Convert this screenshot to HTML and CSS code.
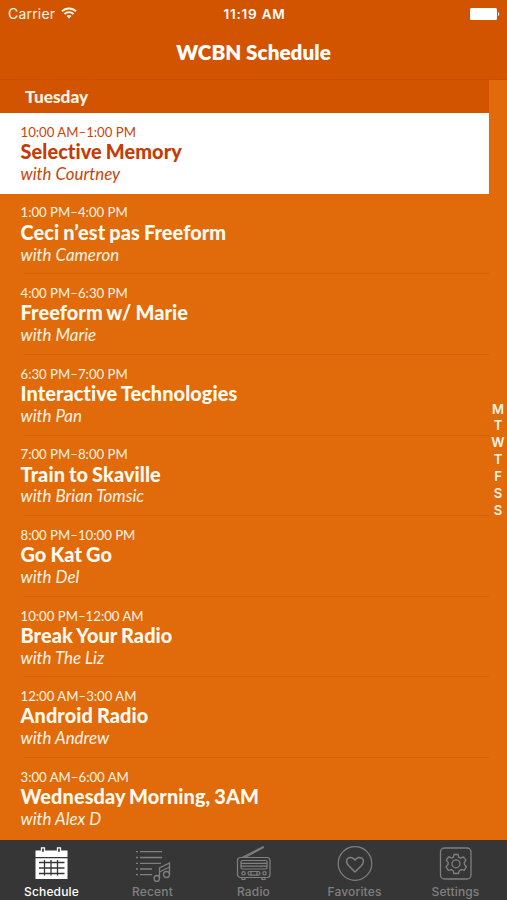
FILE: index.html
```html
<!DOCTYPE html>
<html lang="en">
<head>
<meta charset="utf-8">
<title>WCBN Schedule</title>
<link rel="stylesheet" href="styles.css">
</head>
<body>
<div class="app">
  <header class="top">
    <div class="status">
      <div class="carrier"><span>Carrier</span>
        <svg class="wifi" width="16" height="12" viewBox="0 0 16 12" fill="none" stroke="currentColor" stroke-width="1.900"><path d="M1 4.300a10 10 0 0 1 14 0M3.500 7a6.400 6.400 0 0 1 9 0"/><path d="M5.500 9.100a3.600 3.600 0 0 1 5 0L8 11.600z" fill="currentColor" stroke="none"/></svg>
      </div>
      <div class="clock">11:19 AM</div>
      <svg class="battery" width="30" height="12" viewBox="0 0 30 12" fill="currentColor"><rect width="27" height="12" rx="1.500"/><path d="M28 4a2.200 2.200 0 0 1 0 4z"/></svg>
    </div>
    <h1>WCBN Schedule</h1>
  </header>
  <main>
    <section class="list">
      <h2>Tuesday</h2>
      <ul>
        <li class="now"><time>10:00 AM–1:00 PM</time><h3>Selective Memory</h3><p>with Courtney</p></li>
        <li><time>1:00 PM–4:00 PM</time><h3>Ceci n’est pas Freeform</h3><p>with Cameron</p></li>
        <li><time>4:00 PM–6:30 PM</time><h3>Freeform w/ Marie</h3><p>with Marie</p></li>
        <li><time>6:30 PM–7:00 PM</time><h3>Interactive Technologies</h3><p>with Pan</p></li>
        <li><time>7:00 PM–8:00 PM</time><h3>Train to Skaville</h3><p>with Brian Tomsic</p></li>
        <li><time>8:00 PM–10:00 PM</time><h3>Go Kat Go</h3><p>with Del</p></li>
        <li><time>10:00 PM–12:00 AM</time><h3>Break Your Radio</h3><p>with The Liz</p></li>
        <li><time>12:00 AM–3:00 AM</time><h3>Android Radio</h3><p>with Andrew</p></li>
        <li><time>3:00 AM–6:00 AM</time><h3>Wednesday Morning, 3AM</h3><p>with Alex D</p></li>
      </ul>
    </section>
    <nav class="days"><span>M</span><span>T</span><span>W</span><span>T</span><span>F</span><span>S</span><span>S</span></nav>
  </main>
  <nav class="tabs">
    <a class="active">
      <svg width="36" height="36" viewBox="0 0 36 36"><path d="M1.500 4.500h32v6.500h-32zM1.500 12.200h32V33h-32z" fill="currentColor"/><path d="M7.500 1.800h3v4.500h-3zM23.500 1.800h3v4.500h-3z" fill="#363636" stroke="currentColor" stroke-width="1.300"/><path d="M5 16.500h25.500M5 22h25.500M5 27.500h25.500M10.500 14v15.500M17 14v15.500M23.500 14v15.500" stroke="#363636" stroke-width="1.300"/></svg>
      <span>Schedule</span></a>
    <a>
      <svg width="36" height="36" viewBox="0 0 36 36" fill="none" stroke="currentColor" stroke-width="1.300"><path d="M1 5.700h2M5 5.700h22M1 11.500h2M5 11.500h22M1 17.400h2M5 17.400h21M1 23h2M5 23h12M1 28.700h2M5 28.700h12"/><path d="M24.500 32.500V22L34.500 17V28.500M24.500 26L34.500 21"/><ellipse cx="21.800" cy="32.500" rx="2.700" ry="3"/><ellipse cx="31.500" cy="28.500" rx="3" ry="3"/></svg>
      <span>Recent</span></a>
    <a>
      <svg width="36" height="36" viewBox="0 0 36 36" fill="none" stroke="currentColor" stroke-width="1.200"><path d="M6 11.500L27 .8L27.500 1.600L9 11.500"/><rect x="1.500" y="11.500" width="32.500" height="20" rx="3"/><rect x="5" y="14.500" width="26" height="8.500" rx="1.500"/><path d="M5 17.300h26M5 20.100h26M6 31.500v2h3v-2M26 31.500v2h3v-2"/><circle cx="7.500" cy="27.300" r="1.700"/><circle cx="28.500" cy="27.300" r="1.700"/><rect x="12" y="25.500" width="12" height="3.600" rx="1.800"/><path d="M15 25.500v3.600M21 25.500v3.600"/></svg>
      <span>Radio</span></a>
    <a>
      <svg width="36" height="36" viewBox="0 0 36 36" fill="none" stroke="currentColor" stroke-width="1.200"><circle cx="18" cy="17.500" r="16.800"/><path d="M18 26L11.500 19.500C6 13.500 13.500 8 18 14C22.500 8 30 13.500 24.500 19.500Z" stroke-width="1.500" stroke-linejoin="round"/></svg>
      <span>Favorites</span></a>
    <a>
      <svg width="36" height="36" viewBox="0 0 36 36" fill="none" stroke="currentColor" stroke-width="1.300"><rect x="2.500" y="2" width="30.500" height="31" rx="4"/><circle cx="18" cy="17.800" r="4"/><path d="M15.900 8.500h4.200l.6 2.800 2 .9 2.700-1.400 2.600 3.500-1.800 2.200.3 2.200 2 2-2.300 3.600-2.900-.8-2 1.300-.9 2.700h-4.500l-.8-2.800-1.900-1.100-2.900.8-2.300-3.600 2-2 .2-2.400-2-2.200 2.600-3.500 2.700 1.400 1.900-.9z" stroke-linejoin="round"/></svg>
      <span>Settings</span></a>
  </nav>
</div>
</body>
</html>
```
FILE: styles.css
```css
* { box-sizing: border-box; margin: 0; padding: 0; }
body { font-family: Lato, sans-serif; font-variant-ligatures: none; color: #fff4e6; background: #e16a0a; }
.app { height: 900px; display: flex; flex-direction: column; overflow: hidden; }
.top { height: 80px; background: #d35400; border-bottom: 1px solid #c64f03; }
.status { height: 28px; padding: 0 7px 0 8px; display: grid; grid-template-columns: 1fr auto 1fr; align-items: center; font-family: Inter, sans-serif; font-size: 14px; }
.carrier { display: flex; align-items: center; gap: 6px; letter-spacing: 0.200px; line-height: 16px; }
.carrier span { margin-top: -1px; }
.wifi { margin-top: -2px; }
.clock { font-weight: 600; font-size: 13.500px; letter-spacing: 0.800px; margin-right: -1px; color: #fff; }
.battery { justify-self: end; margin-top: -1px; color: #fff; }
h1 { text-align: center; font-size: 20.700px; line-height: 48px; font-weight: 800; color: #fff; }
main { height: 760px; display: flex; }
.list { width: 489px; }
h2 { height: 33px; padding-left: 25px; font-size: 17.300px; line-height: 34px; font-weight: 900; background: #d35400; }
ul { list-style: none; }
li { height: 80.650px; padding: 10.700px 0 0 20.500px; background: linear-gradient(#d26006, #d26006) 24px 100% / 100% 1px no-repeat; }
li:last-child { background: none; }
.now { background: #fff; color: #c84508; }
.now h3 { color: #c43c05; }
time { display: block; font-size: 13.200px; line-height: 16px; }
h3 { margin-top: -0.700px; font-size: 19.900px; line-height: 24px; font-weight: 900; letter-spacing: 0.080px; word-spacing: -0.800px; color: #fffaf0; }
p { margin-top: 0.900px; font-size: 16.900px; line-height: 20px; font-style: italic; }
.days { width: 18px; padding-top: 320.500px; display: flex; flex-direction: column; align-items: center; font: 600 13px/16.900px Inter, sans-serif; }
.days span { height: 16.900px; }
.tabs { height: 60px; padding: 6px 0 0 1px; display: grid; grid-template-columns: repeat(5, 101px); background: #363636; color: #808080; font-family: Inter, sans-serif; }
.tabs a { display: flex; flex-direction: column; align-items: center; }
.tabs span { font-size: 12px; line-height: 15px; margin-top: 2px; font-weight: 500; letter-spacing: 0.150px; }
.tabs .active { color: #fff; }
```
